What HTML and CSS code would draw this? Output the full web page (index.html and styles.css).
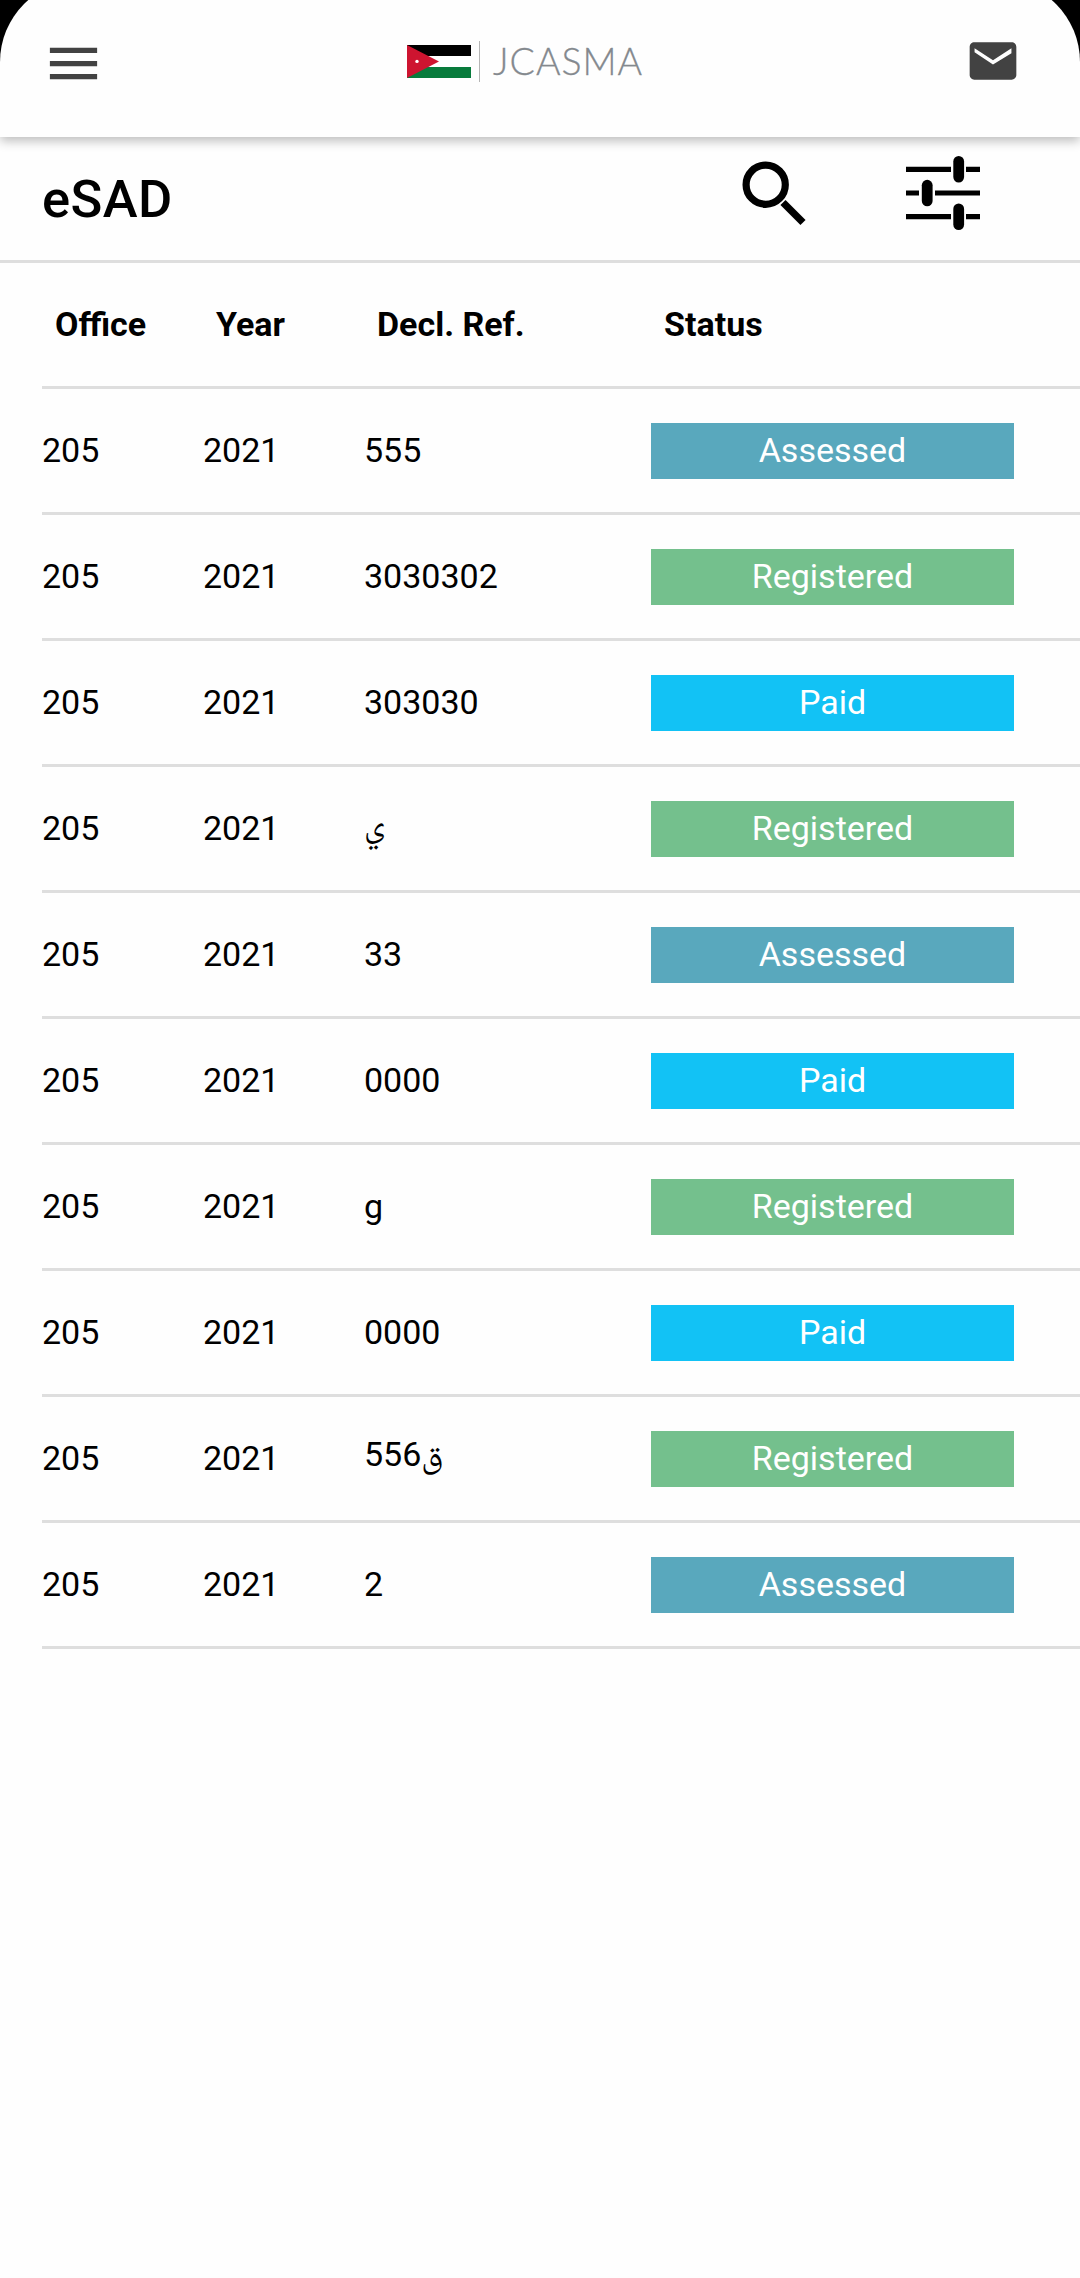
FILE: index.html
```html
<!DOCTYPE html>
<html lang="en">
<head>
    <meta charset="UTF-8">
    <meta name="viewport" content="width=device-width, initial-scale=1.0">
    <title>JCASMA - eSAD</title>
    <link rel="stylesheet" href="styles.css">
</head>
<body>
    <div class="screen">
        <header class="topbar">
            <svg class="menu-icon" viewBox="0 0 24 24"><path d="M3 18h18v-2H3v2zm0-5h18v-2H3v2zm0-7v2h18V6H3z"/></svg>
            <div class="logo">
                <svg class="flag" viewBox="0 0 64 33">
                    <rect width="64" height="11" fill="#000"/>
                    <rect y="11" width="64" height="11" fill="#fff"/>
                    <rect y="22" width="64" height="11" fill="#087b3c"/>
                    <path d="M0 0l32 16.5L0 33z" fill="#ce1430"/>
                    <circle cx="10" cy="16.4" r="1.7" fill="#fff"/>
                </svg>
                <span class="logo-text">JCASMA</span>
            </div>
            <svg class="mail-icon" viewBox="0 0 24 24"><path d="M20 4H4c-1.1 0-2 .9-2 2v12c0 1.1.9 2 2 2h16c1.1 0 2-.9 2-2V6c0-1.1-.9-2-2-2zm-.1 4.7L12 13.5 4.1 8.3V6.5L12 11.7l7.9-5.2z"/></svg>
        </header>

        <div class="titlebar">
            <h1>eSAD</h1>
            <div class="actions">
                <svg class="search-icon" viewBox="0 0 66 66">
                    <circle cx="24.7" cy="24.7" r="19.6"/>
                    <path d="M42 42.5L62 62.5"/>
                </svg>
                <svg class="filter-icon" viewBox="0 0 74 74">
                    <path d="M0 13.3h45M60 13.3h14M0 37h13M29 37h45M0 60.7h45M60 60.7h14"/>
                    <rect x="47.3" y="0" width="10.8" height="26.5" rx="5.4"/>
                    <rect x="15.8" y="23.8" width="10.8" height="26.5" rx="5.4"/>
                    <rect x="47.3" y="47.5" width="10.8" height="26.5" rx="5.4"/>
                </svg>
            </div>
        </div>

        <table class="declarations">
            <thead>
                <tr><th class="col-office">Office</th><th class="col-year">Year</th><th class="col-ref">Decl. Ref.</th><th>Status</th></tr>
            </thead>
            <tbody>
                <tr><td>205</td><td>2021</td><td>555</td><td><div class="status assessed">Assessed</div></td></tr>
                <tr><td>205</td><td>2021</td><td>3030302</td><td><div class="status registered">Registered</div></td></tr>
                <tr><td>205</td><td>2021</td><td>303030</td><td><div class="status paid">Paid</div></td></tr>
                <tr><td>205</td><td>2021</td><td><span class="arabic">ي</span></td><td><div class="status registered">Registered</div></td></tr>
                <tr><td>205</td><td>2021</td><td>33</td><td><div class="status assessed">Assessed</div></td></tr>
                <tr><td>205</td><td>2021</td><td>0000</td><td><div class="status paid">Paid</div></td></tr>
                <tr><td>205</td><td>2021</td><td>g</td><td><div class="status registered">Registered</div></td></tr>
                <tr><td>205</td><td>2021</td><td>0000</td><td><div class="status paid">Paid</div></td></tr>
                <tr><td>205</td><td>2021</td><td class="mixed">556<span class="arabic">ق</span></td><td><div class="status registered">Registered</div></td></tr>
                <tr><td>205</td><td>2021</td><td>2</td><td><div class="status assessed">Assessed</div></td></tr>
            </tbody>
        </table>
    </div>
</body>
</html>
```
FILE: styles.css
```css
* { box-sizing: border-box; }
html {
    background-color: #000;
}
body {
    margin: 0;
    font-family: Roboto, sans-serif;
    font-size: 34px;
    color: #000;
    overflow: hidden;
}
svg {
    display: block;
}
/* the top of the rounded corners runs off the screen */
.screen {
    margin-top: -20px;
    height: 2298px;
    padding-top: 20px;
    background-color: #fefefe;
    border-radius: 82px 82px 0 0;
    overflow: hidden;
}
.topbar {
    display: flex;
    height: 137px;
    padding: 32px 59px 0 42px;
    box-shadow: 0 4px 10px rgba(0,0,0,0.26);
}
.menu-icon {
    width: 63px;
    height: 63px;
    fill: #424242;
}
.mail-icon {
    width: 56px;
    height: 56px;
    margin-top: 1px;
    fill: #424242;
}
.logo {
    display: flex;
    align-items: center;
    height: 41px;
    margin: 9px auto 0 302px;
}
.flag {
    width: 64px;
    height: 33px;
    margin-right: 8px;
}
.logo-text {
    height: 41px;
    line-height: 40px;
    padding-left: 13px;
    border-left: 1px solid #b5b5b5;
    font-family: Lato, sans-serif;
    font-size: 37.5px;
    font-weight: 300;
    letter-spacing: 1px;
    color: #84898e;
    -webkit-text-stroke: 0.3px #84898e;
}
.titlebar {
    display: flex;
    justify-content: space-between;
    height: 126px;
    padding: 19px 100px 0 42px;
    border-bottom: 3px solid #dedede;
}
.titlebar h1 {
    margin: 12px 0 0;
    font-size: 52.5px;
    line-height: 62px;
    font-weight: 500;
    letter-spacing: 0.4px;
}
.actions {
    display: flex;
    gap: 99px;
}
.search-icon {
    width: 66px;
    height: 66px;
    margin-top: 4px;
    fill: none;
    stroke: #000;
    stroke-width: 7.2;
}
.filter-icon {
    width: 74px;
    height: 74px;
}
.filter-icon path {
    stroke: #000;
    stroke-width: 5.2;
}
.declarations {
    width: 1038px;
    margin-left: 42px;
    border-spacing: 0;
    table-layout: fixed;
}
.declarations th, .declarations td {
    height: 126px;
    padding: 0 0 2px;
    border-bottom: 3px solid #dedede;
    text-align: left;
}
.declarations th {
    padding-left: 13px;
    font-weight: 700;
}
.declarations td:last-child, .declarations .mixed {
    padding-bottom: 0;
}
.col-office, .col-year { width: 161px; }
.col-ref { width: 287px; }
.status {
    width: 363px;
    height: 56px;
    line-height: 55px;
    color: #fff;
    text-align: center;
}
.assessed { background-color: #59a8bd; }
.registered { background-color: #74c08d; }
.paid { background-color: #12c2f5; }
.arabic {
    font-family: "Noto Naskh Arabic", "DejaVu Sans", sans-serif;
}
```
